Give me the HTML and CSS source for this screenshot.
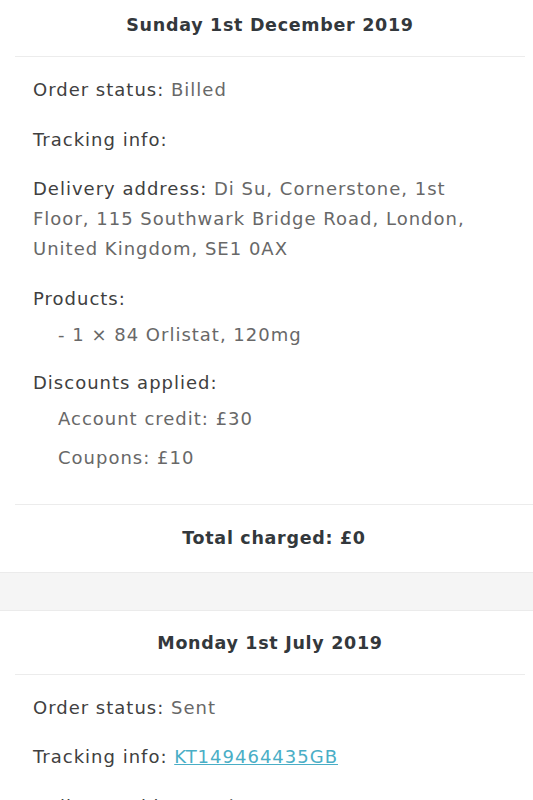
FILE: index.html
```html
<!DOCTYPE html>
<html lang="en">
<head>
<meta charset="utf-8">
<title>Orders</title>
<link rel="stylesheet" href="styles.css">
</head>
<body>
<div class="page">
  <section class="order">
    <h2 class="order-date">Sunday 1st December 2019</h2>
    <div class="order-body">
      <p class="row"><span class="label">Order status:</span> <span class="value">Billed</span></p>
      <p class="row"><span class="label">Tracking info:</span></p>
      <p class="row"><span class="label">Delivery address:</span> <span class="value">Di Su, Cornerstone, 1st Floor, 115 Southwark Bridge Road, London, United Kingdom, SE1 0AX</span></p>
      <div class="row group">
        <div class="label">Products:</div>
        <ul class="sublist">
          <li class="value">- 1 × 84 Orlistat, 120mg</li>
        </ul>
      </div>
      <div class="row group">
        <div class="label">Discounts applied:</div>
        <ul class="sublist discounts">
          <li class="value">Account credit: £30</li>
          <li class="value">Coupons: £10</li>
        </ul>
      </div>
    </div>
    <div class="order-total">Total charged: £0</div>
  </section>
  <div class="band"></div>
  <section class="order">
    <h2 class="order-date">Monday 1st July 2019</h2>
    <div class="order-body">
      <p class="row"><span class="label">Order status:</span> <span class="value">Sent</span></p>
      <p class="row"><span class="label">Tracking info:</span> <a class="link" href="#">KT149464435GB</a></p>
      <p class="row"><span class="label">Delivery address:</span> <span class="value">Di Su, Cornerstone, 1st Floor, 115 Southwark Bridge Road, London, United Kingdom, SE1 0AX</span></p>
    </div>
  </section>
</div>
</body>
</html>
```
FILE: styles.css
```css
html, body {
  margin: 0;
  padding: 0;
  background: #ffffff;
}
body {
  font-family: "DejaVu Sans", "Noto Sans", sans-serif;
  font-size: 18px;
  letter-spacing: 1px;
  color: #3b3b3b;
  overflow: hidden;
}
.page {
  margin-top: -7px;
}
.order {
  background: #ffffff;
}
.order-date {
  margin: 0 8px 0 15px;
  padding: 17px 0 16px;
  line-height: 30px;
  font-size: 17.5px;
  letter-spacing: 0.7px;
  font-weight: bold;
  text-align: center;
  color: #33383c;
  border-bottom: 1px solid #ececec;
}
.order-body {
  padding: 18px 33px 13px;
}
.row {
  margin: 0 0 19.5px;
  line-height: 30px;
}
.group {
  margin-bottom: 18px;
}
.label {
  color: #404040;
}
.value {
  color: #686868;
}
.sublist {
  list-style: none;
  margin: 6px 0 0;
  padding: 0 0 0 25px;
}
.discounts {
  display: flex;
  flex-direction: column;
  gap: 9px;
}
.link {
  color: #4aaec6;
  text-decoration: underline;
}
.order-total {
  margin-left: 15px;
  padding: 18px 0 19px;
  line-height: 30px;
  font-size: 17.5px;
  letter-spacing: 0.7px;
  text-align: center;
  font-weight: bold;
  color: #33383c;
  border-top: 1px solid #ececec;
}
.band {
  height: 37px;
  background: #f5f5f5;
  border-top: 1px solid #ebebeb;
  border-bottom: 1px solid #ebebeb;
}
```
